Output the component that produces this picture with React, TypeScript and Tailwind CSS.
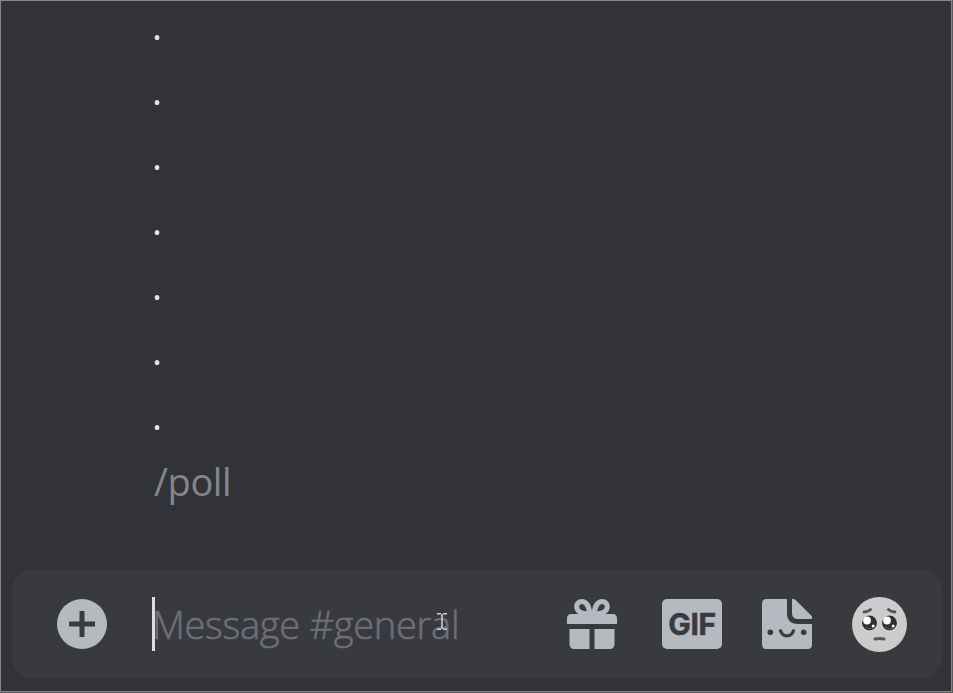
import React from "react";

const dots = [0, 1, 2, 3, 4, 5, 6];

function Plus() {
  return (
    <svg width="50" height="50" viewBox="0 0 50 50" className="block">
      <circle cx="25" cy="25" r="25" fill="#b5bac1" />
      <path d="M25 12v26M12 25h26" stroke="#383a40" strokeWidth="5" />
    </svg>
  );
}

function Gift() {
  return (
    <svg width="50" height="50" viewBox="0 0 50 50" className="block" fill="#b5bac1">
      <path
        fillRule="evenodd"
        d="M15 0C20.500 0 24.300 5 25 12C25.700 5 29.500 0 35 0C39.600 0 42.800 3.300 42.800 7.500C42.800 11 41 13.500 38.500 15H46C48.300 15 50 16.700 50 19V25H0V19C0 16.700 1.700 15 4 15H11.500C9 13.500 7.200 11 7.200 7.500C7.200 3.300 10.400 0 15 0ZM15 5C13.300 5 12.200 6 12.200 7.500C12.200 10 14.500 12 19.800 12.200C18.800 8 17.200 5 15 5ZM35 5C32.800 5 31.200 8 30.200 12.200C35.500 12 37.800 10 37.800 7.500C37.800 6 36.700 5 35 5Z"
      />
      <path d="M2.500 30H22.500V50H7.500Q2.500 50 2.500 45ZM27.500 30H47.500V45Q47.500 50 42.500 50H27.500Z" />
    </svg>
  );
}

function Sticker() {
  return (
    <svg width="50" height="50" viewBox="0 0 50 50" className="block">
      <path d="M4.500 0H25V14Q25 25 36 25H50V45.500Q50 50 45.500 50H4.500Q0 50 0 45.500V4.500Q0 0 4.500 0Z" fill="#b5bac1" />
      <path d="M30 0H31.500Q32.600 0 33.400 .8L49.200 16.600Q50 17.400 50 18.500V20H36Q30 20 30 14Z" fill="#b5bac1" />
      <circle cx="8.300" cy="33.300" r="2.800" fill="#383a40" />
      <circle cx="41.700" cy="33.300" r="2.800" fill="#383a40" />
      <path d="M18.200 30.500C19.700 39 30.300 39 31.800 30.500" stroke="#383a40" strokeWidth="3.300" fill="none" />
    </svg>
  );
}

function Emoji() {
  return (
    <svg width="55" height="55" viewBox="0 0 55 55" className="block">
      <circle cx="27.500" cy="27.500" r="27.500" fill="#cccccc" />
      <circle cx="17.300" cy="26.500" r="8" fill="#e4e4e4" />
      <circle cx="37.700" cy="26.500" r="8" fill="#e4e4e4" />
      <circle cx="17.500" cy="26" r="7.500" fill="#303030" />
      <circle cx="37.500" cy="26" r="7.500" fill="#303030" />
      <g fill="#ffffff">
        <circle cx="15" cy="23.500" r="3.900" />
        <circle cx="35" cy="23.500" r="3.900" />
        <circle cx="21.200" cy="29" r="1.500" />
        <circle cx="41.200" cy="29" r="1.500" />
      </g>
      <path d="M13 30Q17 33 21 31.500M33 30Q37 33 41 31.500" stroke="#606060" strokeWidth="1" fill="none" />
      <path d="M12 15Q16.500 14.600 18.600 12.500M43 15Q38.500 14.600 36.400 12.500" stroke="#555555" strokeWidth="2.800" strokeLinecap="round" fill="none" />
      <path d="M23 42Q27.500 40.800 32 42" stroke="#5a5a5a" strokeWidth="3" strokeLinecap="round" fill="none" />
    </svg>
  );
}

export default function App() {
  return (
    <div className="flex h-[693px] w-[953px] flex-col overflow-hidden border-b border-r border-[#5b5b5e] bg-[#313338] font-['Open_Sans',sans-serif]">
      <div className="flex h-full flex-col border border-[#858587] pl-[11px] pr-[9px]">
        <div className="flex h-[568px] flex-col pl-[140px] text-[38px]">
          {dots.map((d) => (
            <div key={d} className="h-[65px] leading-[48px] text-[#e4e6e9]">.</div>
          ))}
          <div className="h-[65px] pl-[2px] leading-[50px] tracking-[-0.4px] text-[#85868a]">/poll</div>
        </div>
        <div className="flex h-[110px] w-[930px] items-center rounded-[22px] bg-[#383a40] pl-[45px]">
          <Plus />
          <div className="relative ml-[45px] flex h-[54px] w-[415px] items-center">
            <div className="h-[54px] w-[3px] bg-[#dbdee1]" />
            <span className="-ml-[3px] whitespace-nowrap text-[38px] font-light leading-[54px] tracking-[-0.28px] text-[#6d6f78] [-webkit-text-stroke:0.6px_#6d6f78]">Message #general</span>
            <svg className="absolute left-[285px] top-[16px]" width="10" height="17" viewBox="0 0 10 17">
              <path d="M0 .8H4M6 .8H10M5 1V16M0 16.300H4M6 16.300H10" stroke="#cfcfc9" strokeWidth="1.600" />
            </svg>
          </div>
          <Gift />
          <div className="ml-[45px] flex h-[50px] w-[60px] items-center justify-center rounded-[5px] bg-[#b5bac1]">
            <span className="font-['Inter',sans-serif] text-[30px] font-bold leading-[50px] tracking-[-0.3px] text-[#383a40] [-webkit-text-stroke:0.5px_#383a40]">GIF</span>
          </div>
          <div className="ml-[40px]"><Sticker /></div>
          <div className="ml-[40px]"><Emoji /></div>
        </div>
      </div>
    </div>
  );
}
